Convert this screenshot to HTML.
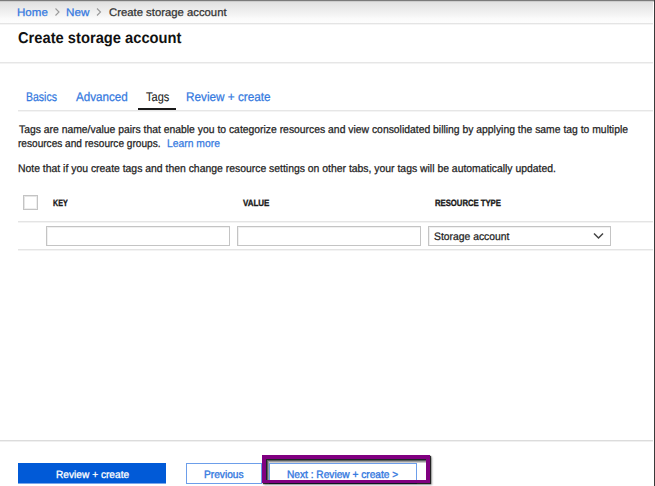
<!DOCTYPE html>
<html><head><meta charset="utf-8"><style>
html,body{margin:0;padding:0;background:#fff;}
body{width:655px;height:486px;position:relative;overflow:hidden;font-family:"Liberation Sans",sans-serif;}
.t{-webkit-text-stroke:0.25px currentColor;position:absolute;white-space:nowrap;line-height:20px;transform-origin:0 0;text-rendering:geometricPrecision;}
.r{position:absolute;}
</style></head><body>
<!-- breadcrumb bar -->
<div class="r" style="left:0;top:0;width:653px;height:23px;background:linear-gradient(#dcdcdc 0px,#e2e2e2 3px,#eeeeee 11px,#fbfbfb 19px,#fdfdfd 23px)"></div>
<div class="r" style="left:0;top:0;width:655px;height:1px;background:#7a7a7a"></div>
<div class="r" style="left:0;top:1px;width:655px;height:1px;background:#cdcdcd"></div>
<div class="r" style="left:0;top:23px;width:653px;height:1px;background:#e4e4e4"></div><div class="r" style="left:0;top:24px;width:653px;height:1px;background:#f5f5f5"></div>
<svg class="r" style="left:0;top:0" width="655" height="30">
<polyline points="55.5,8.5 59,12 55.5,15.5" fill="none" stroke="#999" stroke-width="1.1"/>
<polyline points="97,8.5 100.5,12 97,15.5" fill="none" stroke="#999" stroke-width="1.1"/>
</svg>
<!-- header separator -->
<div class="r" style="left:0;top:62px;width:653px;height:1px;background:#e6e6e6"></div><div class="r" style="left:0;top:63px;width:653px;height:1px;background:#f3f3f3"></div>
<!-- tabs line -->
<div class="r" style="left:18px;top:110px;width:635px;height:1px;background:#e6e6e6"></div><div class="r" style="left:18px;top:111px;width:635px;height:1px;background:#f4f4f4"></div>
<div class="r" style="left:138px;top:108px;width:38px;height:2px;background:#1a1a1a"></div>
<!-- table -->
<div class="r" style="left:23px;top:195px;width:13px;height:13px;border:1px solid #c4c4c4;box-shadow:inset 1px 1px 0 #e6e6e6, inset -1px -1px 0 #eeeeee"></div>
<div class="r" style="left:18px;top:221px;width:635px;height:1px;background:#e4e4e4"></div><div class="r" style="left:18px;top:222px;width:635px;height:1px;background:#f3f3f3"></div>
<div class="r" style="left:18px;top:249px;width:635px;height:1px;background:#e4e4e4"></div><div class="r" style="left:18px;top:250px;width:635px;height:1px;background:#f3f3f3"></div>
<div class="r" style="left:46px;top:226px;width:182px;height:18px;border:1px solid #c4c4c4;box-shadow:inset 1px 1px 0 #f0f0f0"></div>
<div class="r" style="left:237px;top:226px;width:182px;height:18px;border:1px solid #c4c4c4;box-shadow:inset 1px 1px 0 #f0f0f0"></div>
<div class="r" style="left:428px;top:226px;width:181px;height:18px;border:1px solid #c4c4c4;box-shadow:inset 1px 1px 0 #f0f0f0"></div>
<svg class="r" style="left:590px;top:228px" width="20" height="16">
<polyline points="4,5.5 8.5,10 13,5.5" fill="none" stroke="#444" stroke-width="1.5"/>
</svg>
<!-- footer -->
<div class="r" style="left:0;top:440px;width:653px;height:1px;background:#dcdcdc"></div><div class="r" style="left:0;top:441px;width:653px;height:1px;background:#f0f0f0"></div>
<div class="r" style="left:18px;top:463px;width:148px;height:20px;background:#015ad7"></div><div class="r" style="left:18px;top:483px;width:148px;height:1px;background:#7aa6ea"></div>
<div class="r" style="left:186px;top:463px;width:74px;height:19px;border:1px solid #6d9eea"></div>
<div class="r" style="left:269px;top:463px;width:146px;height:19px;border:1px solid #6d9eea"></div>
<!-- purple highlight -->
<div class="r" style="left:262px;top:455px;width:160px;height:21px;border:4px solid #800080;border-bottom-width:3px;box-shadow:inset 1px 1px 0 #1e2626, inset 2px 2px 0 #5a5f5f, inset 3px 3px 0 #9a9a9a, inset 3px 4px 0 #cdcdcd, 1px 1px 1px rgba(0,0,0,.8), 2px 2px 2px rgba(0,0,0,.35)"></div>
<!-- right border -->
<div class="r" style="left:654px;top:0;width:1px;height:486px;background:#3a3a3a"></div>
<div class="t" style="left:16.95px;top:3px;font-size:11.00px;color:#3479e0;transform:scaleX(1.0500);">Home</div>
<div class="t" style="left:65.94px;top:3px;font-size:11.00px;color:#3479e0;transform:scaleX(1.0619);">New</div>
<div class="t" style="left:108.80px;top:3px;font-size:11.00px;color:#333;transform:scaleX(1.0281);">Create storage account</div>
<div class="t" style="left:17.90px;top:29px;font-size:15.60px;font-weight:bold;color:#111;transform:scaleX(0.9431);-webkit-text-stroke:0px currentColor;">Create storage account</div>
<div class="t" style="left:25.76px;top:87px;font-size:12.50px;color:#3479e0;transform:scaleX(0.8389);">Basics</div>
<div class="t" style="left:75.80px;top:87px;font-size:12.50px;color:#3479e0;transform:scaleX(0.9309);">Advanced</div>
<div class="t" style="left:145.60px;top:87px;font-size:12.50px;color:#222;transform:scaleX(0.8808);-webkit-text-stroke:0.1px currentColor;">Tags</div>
<div class="t" style="left:186.26px;top:87px;font-size:12.50px;color:#3479e0;transform:scaleX(0.9393);">Review + create</div>
<div class="t" style="left:18.70px;top:120px;font-size:11.00px;color:#222;transform:scaleX(0.9431);">Tags are name/value pairs that enable you to categorize resources and view consolidated billing by applying the same tag to multiple</div>
<div class="t" style="left:17.78px;top:134px;font-size:11.00px;color:#222;transform:scaleX(0.9175);">resources and resource groups.</div>
<div class="t" style="left:167.06px;top:134px;font-size:11.00px;color:#3479e0;transform:scaleX(0.9400);">Learn more</div>
<div class="t" style="left:17.55px;top:159px;font-size:11.00px;color:#222;transform:scaleX(0.9460);">Note that if you create tags and then change resource settings on other tabs, your tags will be automatically updated.</div>
<div class="t" style="left:52.80px;top:193px;font-size:9.20px;font-weight:bold;color:#1a1a1a;transform:scaleX(0.7789);-webkit-text-stroke:0.35px currentColor;">KEY</div>
<div class="t" style="left:243.40px;top:193px;font-size:9.20px;font-weight:bold;color:#1a1a1a;transform:scaleX(0.8667);-webkit-text-stroke:0.35px currentColor;">VALUE</div>
<div class="t" style="left:434.60px;top:193px;font-size:9.20px;font-weight:bold;color:#1a1a1a;transform:scaleX(0.8380);-webkit-text-stroke:0.35px currentColor;">RESOURCE TYPE</div>
<div class="t" style="left:433.94px;top:227px;font-size:10.80px;color:#222;transform:scaleX(0.9590);">Storage account</div>
<div class="t" style="left:56.03px;top:465px;font-size:10.50px;color:#fff;transform:scaleX(0.9676);-webkit-text-stroke:0.3px currentColor;">Review + create</div>
<div class="t" style="left:203.86px;top:465px;font-size:10.80px;color:#3479e0;transform:scaleX(0.9415);-webkit-text-stroke:0.38px currentColor;">Previous</div>
<div class="t" style="left:286.56px;top:465px;font-size:10.80px;color:#3479e0;transform:scaleX(0.9402);-webkit-text-stroke:0.38px currentColor;">Next : Review + create &gt;</div>
</body></html>
